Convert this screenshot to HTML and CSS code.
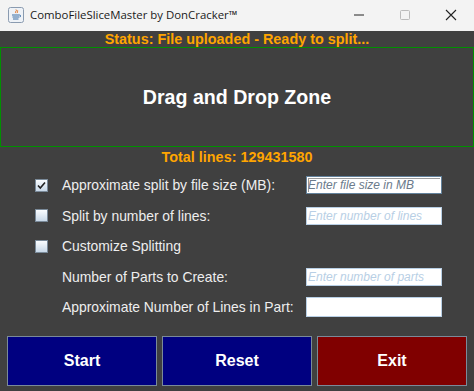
FILE: index.html
```html
<!DOCTYPE html>
<html lang="en">
  <head>
    <meta charset="UTF-8">
    <meta name="viewport" content="width=device-width, initial-scale=1.0">
    <title>ComboFileSliceMaster by DonCracker™</title>
    <link rel="stylesheet" href="styles.css">
  </head>
  <body>
    <div id="window">
      <div id="titlebar">
        <div class="app-icon">
          <svg width="16" height="16" viewBox="0 0 16 16">
            <rect x="0.5" y="0.5" width="15" height="15" rx="2" fill="#eef2f7" stroke="#8a9bb0"/>
            <path d="M8 2.5c1.5 1.2-1.6 2.2 0 3.6M9.6 3.4c.8.8-.9 1.4 0 2.4" stroke="#e07020" fill="none" stroke-width="1"/>
            <path d="M4 8h7.5M4.5 10h6.5M5 12h5.5" stroke="#3a6ea5" stroke-width="1"/>
            <path d="M11.5 8c1.5 0 1.5 2 0 2" stroke="#3a6ea5" fill="none"/>
          </svg>
        </div>
        <div class="title">ComboFileSliceMaster by DonCracker™</div>
        <div class="controls">
          <span class="ctl">
            <svg width="12" height="12" viewBox="0 0 12 12"><path d="M1 6h10" stroke="#222" stroke-width="1"/></svg>
          </span>
          <span class="ctl">
            <svg width="12" height="12" viewBox="0 0 12 12"><rect x="1.5" y="1.5" width="9" height="9" rx="1" fill="none" stroke="#bbb"/></svg>
          </span>
          <span class="ctl">
            <svg width="12" height="12" viewBox="0 0 12 12"><path d="M1 1l10 10M11 1L1 11" stroke="#222" stroke-width="1.1"/></svg>
          </span>
        </div>
      </div>

      <div id="content">
        <div class="status">Status: File uploaded - Ready to split...</div>
        <div id="dropzone">Drag and Drop Zone</div>
        <div class="total">Total lines: 129431580</div>

        <div id="options">
          <span class="check checked">
            <svg width="9" height="9" viewBox="0 0 9 9"><path d="M1 4.5l2.3 2.5L8 1.5" stroke="#222" stroke-width="1.6" fill="none"/></svg>
          </span>
          <span class="label">Approximate split by file size (MB):</span>
          <span class="field focused">Enter file size in MB</span>

          <span class="check"></span>
          <span class="label">Split by number of lines:</span>
          <span class="field">Enter number of lines</span>

          <span class="check"></span>
          <span class="label">Customize Splitting</span>
          <span></span>

          <span></span>
          <span class="label">Number of Parts to Create:</span>
          <span class="field">Enter number of parts</span>

          <span></span>
          <span class="label">Approximate Number of Lines in Part:</span>
          <span class="field tall"></span>
        </div>

        <div id="buttons">
          <button class="blue">Start</button>
          <button class="blue">Reset</button>
          <button class="red">Exit</button>
        </div>
      </div>
    </div>
  </body>
</html>
```

FILE: styles.css
```css
body {
  margin: 0;
  font-family: "Liberation Sans", Arial, sans-serif;
  background-color: #404040;
}

#window {
  width: 474px;
  height: 391px;
  display: flex;
  flex-direction: column;
  overflow: hidden;
}

#titlebar {
  height: 31px;
  flex: none;
  background-color: #f3f3f3;
  display: flex;
  align-items: center;
  padding-left: 8px;
  box-sizing: border-box;
}

.app-icon {
  width: 16px;
  height: 16px;
  margin-right: 6px;
  margin-top: -2px;
}

.title {
  font-family: "Open Sans", "Noto Sans", sans-serif;
  font-size: 11.4px;
  color: #1a1a1a;
  flex: 1;
  margin-top: -2px;
}

.controls {
  display: flex;
  height: 100%;
}

.ctl {
  width: 46px;
  display: flex;
  align-items: center;
  justify-content: center;
  margin-top: -2px;
}

#content {
  flex: 1;
  background-color: #404040;
  display: flex;
  flex-direction: column;
}

.status,
.total {
  color: #ffa500;
  font-weight: bold;
  font-size: 14.4px;
  text-align: center;
  height: 16px;
  line-height: 16px;
}

#dropzone {
  height: 100px;
  box-sizing: border-box;
  border: 1px solid #009000;
  display: flex;
  align-items: center;
  justify-content: center;
  color: #fff;
  font-weight: bold;
  font-size: 19.6px;
  flex: none;
}

.total {
  margin-top: 2px;
}

#options {
  display: grid;
  grid-template-columns: 27px 244px 136px;
  grid-auto-rows: 30.5px;
  align-items: center;
  padding: 5px 0 0 35px;
}

.check {
  width: 13px;
  height: 13px;
  box-sizing: border-box;
  border: 1px solid #7a8a99;
  background: linear-gradient(#fafcfe, #c8d8e8);
  display: flex;
  align-items: center;
  justify-content: center;
}

.label {
  color: #eeeeee;
  font-size: 13.9px;
  white-space: nowrap;
}

.field {
  height: 18px;
  box-sizing: border-box;
  background-color: #fff;
  border: 1px solid #b8cfe5;
  font-style: italic;
  font-size: 12px;
  color: #b8cfe5;
  line-height: 16px;
  padding-left: 1px;
  white-space: nowrap;
  overflow: hidden;
}

.field.focused {
  border: 1px solid #63829c;
  box-shadow: inset 0 0 0 1px #fff, inset 1px 1px 0 1px #999;
  color: #6b7b8c;
}

.field.tall {
  height: 20px;
}

#buttons {
  display: grid;
  grid-template-columns: repeat(3, 1fr);
  gap: 5px;
  padding: 0 7px;
  margin-top: auto;
  margin-bottom: 5px;
}

#buttons button {
  height: 50px;
  border: 1px solid #7a8a99;
  color: #fff;
  font-family: "Liberation Sans", Arial, sans-serif;
  font-weight: bold;
  font-size: 16px;
  cursor: pointer;
}

#buttons .blue {
  background-color: #000080;
}

#buttons .red {
  background-color: #800000;
}
```
